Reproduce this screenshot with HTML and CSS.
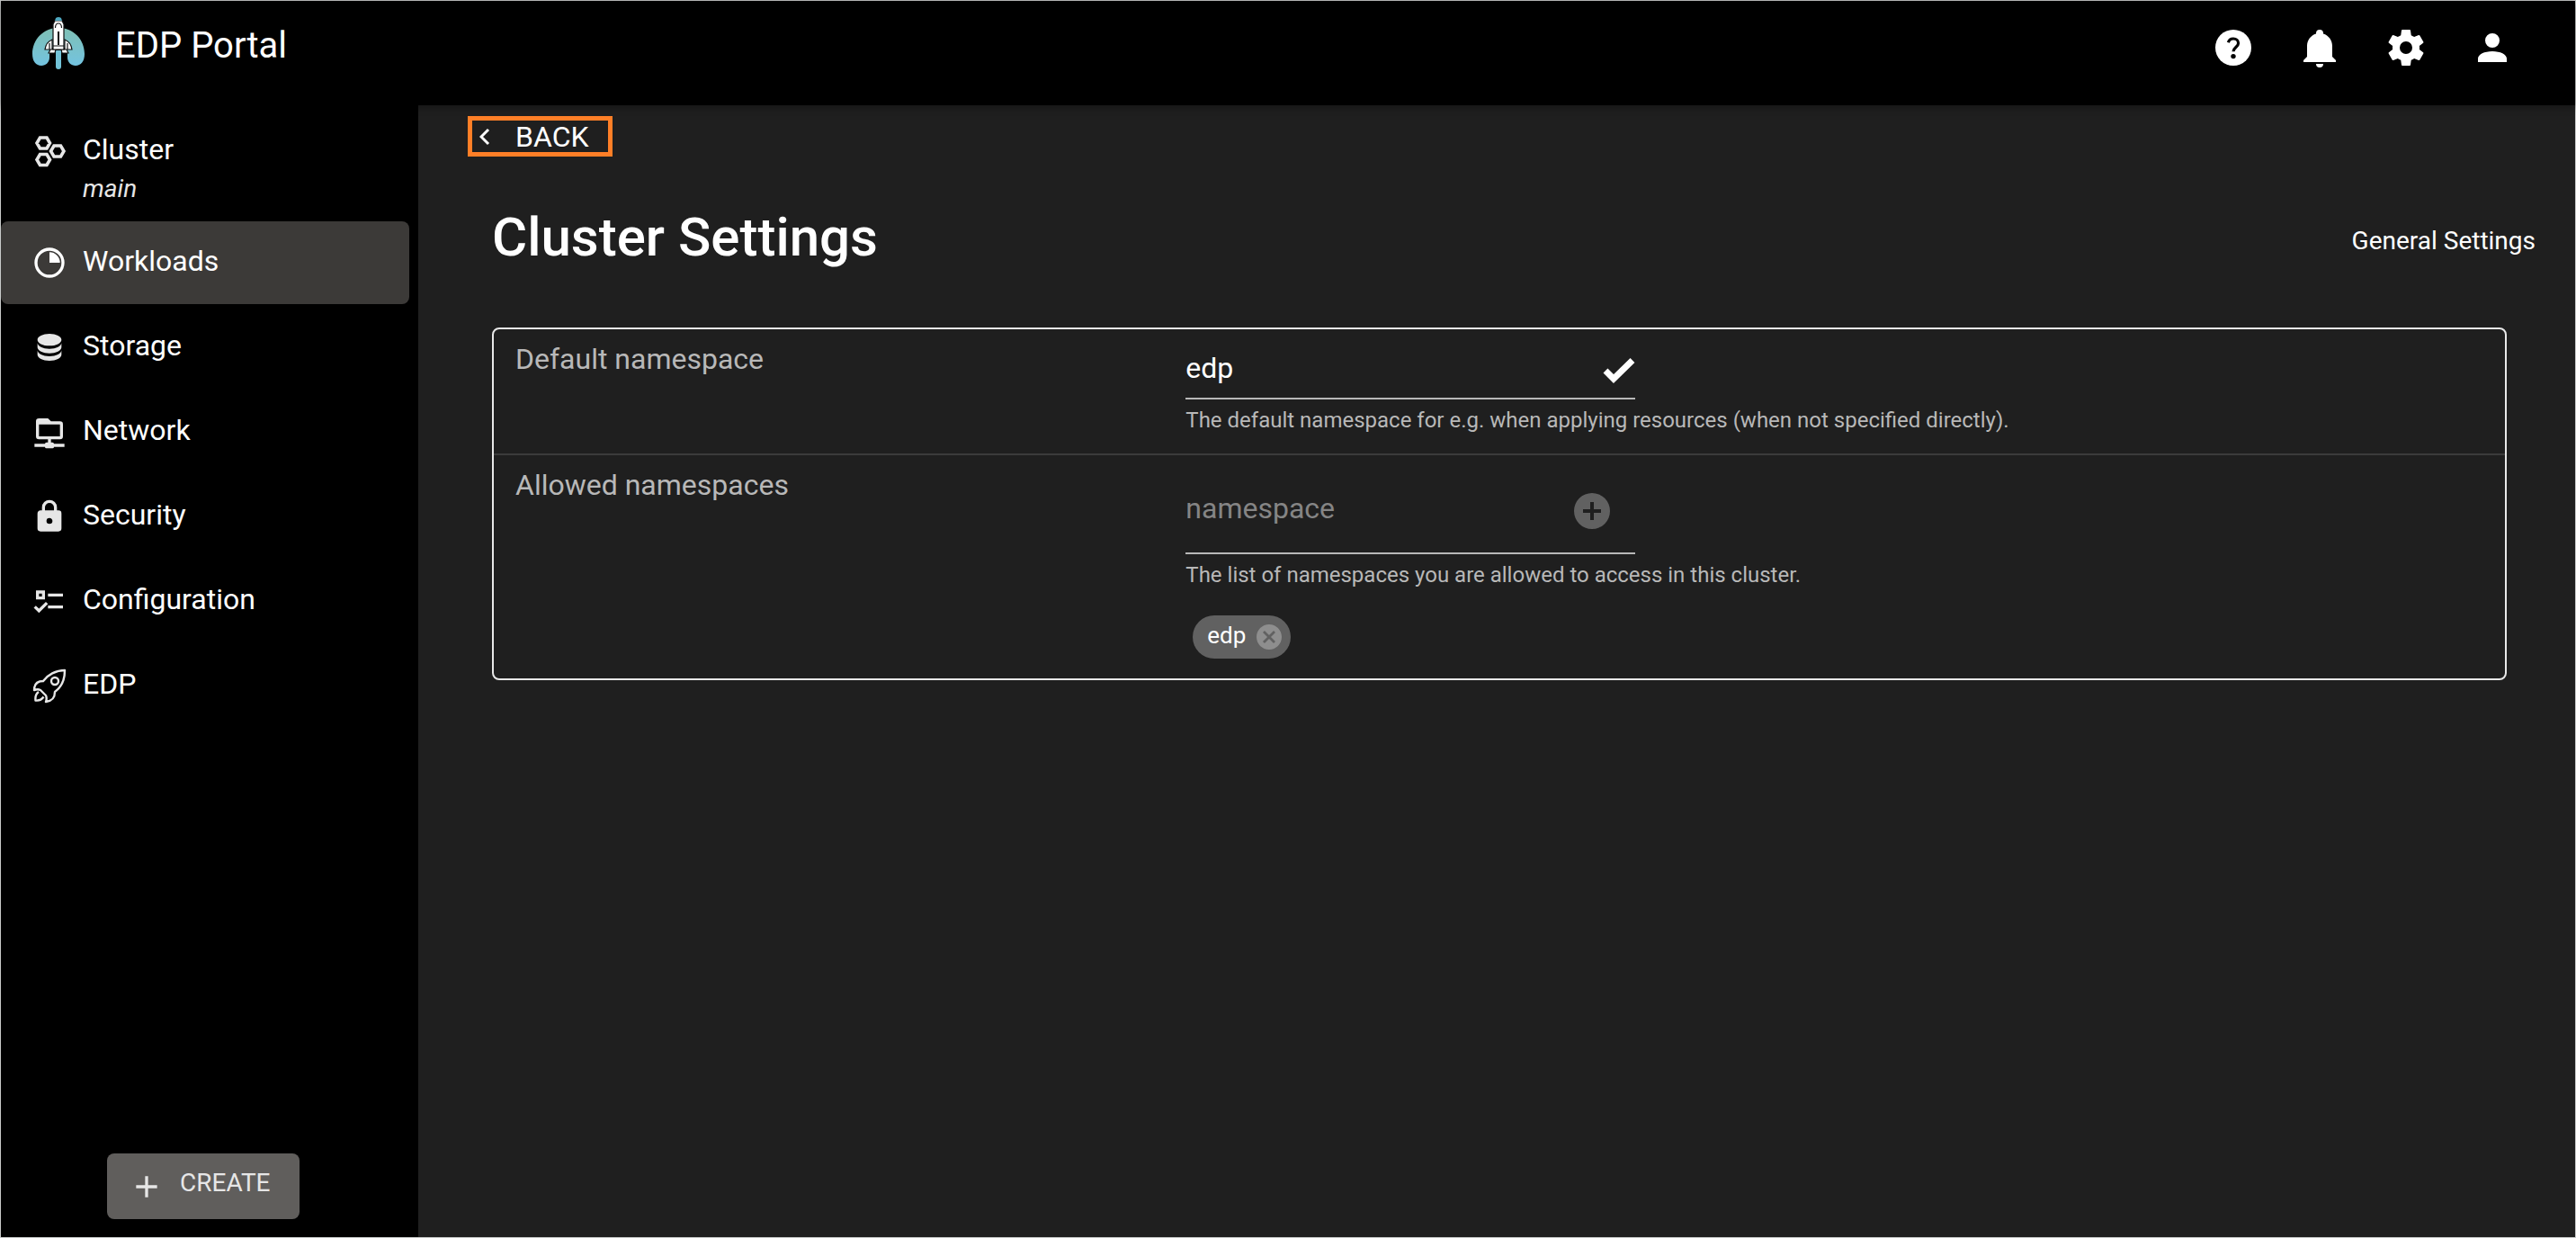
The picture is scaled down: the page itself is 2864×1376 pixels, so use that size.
FILE: index.html
```html
<!DOCTYPE html>
<html lang="en">
<head>
<meta charset="utf-8">
<title>EDP Portal</title>
<link rel="stylesheet" href="styles.css">
</head>
<body>
<div class="app">
  <header class="topbar">
    <svg class="logo" viewBox="0 0 58 58" aria-hidden="true">
      <defs><linearGradient id="sky" x1="0" y1="0" x2="0" y2="1"><stop offset="0" stop-color="#7fc0b4"/><stop offset="1" stop-color="#73c3e0"/></linearGradient></defs>
      <path fill="url(#sky)" d="M29 12C12 12 0 25 0 41c0 8 4 13 10 13 5 0 9-4 9-9V34h20v11c0 5 4 9 9 9 6 0 10-5 10-13C58 25 46 12 29 12z"/>
      <path fill="#73c3d8" d="M26 37h6v18a3 3 0 0 1-6 0z"/>
      <g fill="#fff" stroke="#111" stroke-width="1.200">
        <path d="M22 25v11h-8q1-8 8-11zM36 25v11h8q-1-8-8-11zM20 36h6l-1 4h-7zM32 36h6l2 4h-7z"/>
        <path d="M23 36V8l2-4h8l2 4v28z"/>
        <path fill="none" d="M25.500 12q0-5 3.500-5t3.500 5M19 29v7M39 29v7M23 32h12"/>
        <path fill="none" stroke-width="2" d="M29 16v15"/>
      </g>
      <path fill="#4fa8c0" d="M26 1q3-2 6 0l1 3h-8z"/>
    </svg>
    <div class="brand">EDP Portal</div>
    <nav class="actions" aria-label="Account">
      <button type="button" aria-label="Help"><svg viewBox="0 0 24 24"><circle cx="12" cy="12" r="10" fill="currentColor"/><path d="M9.200 9.100C9.600 7.700 10.600 7 12 7c1.600 0 2.800 1 2.800 2.500 0 2-2.800 2.500-2.800 4.600" fill="none" stroke="#000" stroke-width="1.600"/><circle cx="12" cy="16.800" r="1.350" fill="#000"/></svg></button>
      <button type="button" aria-label="Notifications"><svg viewBox="0 0 24 24"><path fill="currentColor" d="M21,19V20H3V19L5,17V11C5,7.900 7.030,5.170 10,4.290C10,4.190 10,4.100 10,4A2,2 0 0,1 12,2A2,2 0 0,1 14,4C14,4.100 14,4.190 14,4.290C16.970,5.170 19,7.900 19,11V17L21,19M14,21A2,2 0 0,1 12,23A2,2 0 0,1 10,21"/></svg></button>
      <button type="button" aria-label="Settings"><svg viewBox="0 0 24 24"><path fill="currentColor" d="M12,15.5A3.5,3.5 0 0,1 8.5,12A3.5,3.5 0 0,1 12,8.5A3.5,3.5 0 0,1 15.5,12A3.5,3.5 0 0,1 12,15.5M19.43,12.97C19.47,12.65 19.5,12.33 19.5,12C19.5,11.67 19.47,11.34 19.43,11L21.54,9.37C21.73,9.22 21.78,8.95 21.66,8.73L19.66,5.27C19.54,5.05 19.27,4.96 19.05,5.05L16.56,6.05C16.04,5.66 15.5,5.32 14.87,5.07L14.5,2.42C14.46,2.18 14.25,2 14,2H10C9.75,2 9.54,2.18 9.5,2.42L9.13,5.07C8.5,5.32 7.96,5.66 7.44,6.05L4.95,5.05C4.73,4.96 4.46,5.05 4.34,5.27L2.34,8.73C2.21,8.95 2.27,9.22 2.46,9.37L4.57,11C4.53,11.34 4.5,11.67 4.5,12C4.5,12.33 4.53,12.65 4.57,12.97L2.46,14.63C2.27,14.78 2.21,15.05 2.34,15.27L4.34,18.73C4.46,18.95 4.73,19.03 4.95,18.95L7.44,17.94C7.96,18.34 8.5,18.68 9.13,18.93L9.5,21.58C9.54,21.82 9.75,22 10,22H14C14.25,22 14.46,21.82 14.5,21.58L14.87,18.93C15.5,18.67 16.04,18.34 16.56,17.94L19.05,18.95C19.27,19.03 19.54,18.95 19.66,18.73L21.66,15.27C21.78,15.05 21.73,14.78 21.54,14.63L19.43,12.97Z"/></svg></button>
      <button type="button" aria-label="Account"><svg viewBox="0 0 24 24"><path fill="currentColor" d="M12,4A4,4 0 0,1 16,8A4,4 0 0,1 12,12A4,4 0 0,1 8,8A4,4 0 0,1 12,4M12,14C16.42,14 20,15.79 20,18V20H4V18C4,15.79 7.58,14 12,14Z"/></svg></button>
    </nav>
  </header>

  <aside class="sidebar">
    <nav class="menu" aria-label="Main">
      <a class="item item-cluster" href="#cluster">
        <svg viewBox="0 0 40 40" fill="none" stroke="currentColor" stroke-width="3.600"><path d="M9.500 5h7.500l3.500 6-3.500 6H9.500L6 11zM25 14h7.500l3.500 6-3.500 6H25l-3.500-6zM9.500 23.500h7.500l3.500 6-3.500 6H9.500L6 29.500z"/></svg>
        <span class="label">Cluster<em>main</em></span>
      </a>
      <a class="item active" href="#workloads" aria-current="page">
        <svg viewBox="0 0 24 24" fill="currentColor"><path d="M12 2a10 10 0 1 0 0 20 10 10 0 0 0 0-20m0 18a8 8 0 1 1 0-16 8 8 0 0 1 0 16m0-15v7h7a7 7 0 0 0-7-7"/></svg>
        <span class="label">Workloads</span>
      </a>
      <a class="item" href="#storage">
        <svg viewBox="0 0 24 24" fill="currentColor"><path d="M12,3C7.58,3 4,4.790 4,7C4,9.210 7.580,11 12,11C16.420,11 20,9.210 20,7C20,4.790 16.420,3 12,3M4,9V12C4,14.210 7.580,16 12,16C16.420,16 20,14.210 20,12V9C20,11.210 16.420,13 12,13C7.580,13 4,11.210 4,9M4,14V17C4,19.210 7.580,21 12,21C16.420,21 20,19.210 20,17V14C20,16.210 16.420,18 12,18C7.580,18 4,16.210 4,14Z"/></svg>
        <span class="label">Storage</span>
      </a>
      <a class="item" href="#network">
        <svg viewBox="0 0 24 24" fill="currentColor"><path d="M15,20A1,1 0 0,0 14,19H13V17H19A2,2 0 0,0 21,15V7A2,2 0 0,0 19,5H13L11,3H5A2,2 0 0,0 3,5V15A2,2 0 0,0 5,17H11V19H10A1,1 0 0,0 9,20H2V22H9A1,1 0 0,0 10,23H14A1,1 0 0,0 15,22H22V20H15M5,15V7H19V15H5Z"/></svg>
        <span class="label">Network</span>
      </a>
      <a class="item" href="#security">
        <svg viewBox="0 0 24 24" fill="currentColor"><path d="M12,17A2,2 0 0,0 14,15C14,13.890 13.100,13 12,13A2,2 0 0,0 10,15A2,2 0 0,0 12,17M18,8A2,2 0 0,1 20,10V20A2,2 0 0,1 18,22H6A2,2 0 0,1 4,20V10C4,8.890 4.900,8 6,8H7V6A5,5 0 0,1 12,1A5,5 0 0,1 17,6V8H18M12,3A3,3 0 0,0 9,6V8H15V6A3,3 0 0,0 12,3Z"/></svg>
        <span class="label">Security</span>
      </a>
      <a class="item" href="#configuration">
        <svg viewBox="0 0 24 24" fill="currentColor"><path d="M3,5H9V11H3V5M5,7V9H7V7H5M11,7H21V9H11V7M11,15H21V17H11V15M5,20L1.500,16.500L2.910,15.090L5,17.170L9.590,12.590L11,14L5,20Z"/></svg>
        <span class="label">Configuration</span>
      </a>
      <a class="item" href="#edp">
        <svg viewBox="0 0 40 40" fill="none" stroke="currentColor" stroke-width="2.400" stroke-linejoin="round"><path d="M37 3c-10 0-19 5-24 12-7 0-10 4-10 10 3-1 5-1 7 0l6 6c1 2 1 4 0 7 7-1 10-4 10-11 7-5 11-13 11-24zM8 27c-3 2-4 5-3.500 9.500 4 .5 7-1 9-4"/><circle cx="26" cy="15" r="4"/></svg>
        <span class="label">EDP</span>
      </a>
    </nav>
    <button class="create" type="button">
      <svg viewBox="0 0 24 24" fill="currentColor"><path d="M19 13h-6v6h-2v-6H5v-2h6V5h2v6h6z"/></svg>
      <span>CREATE</span>
    </button>
  </aside>

  <main class="content">
    <button class="back" type="button">
      <svg viewBox="0 0 12 20" fill="none" stroke="currentColor" stroke-width="3"><path d="M10 2l-8 8 8 8"/></svg>
      <span>BACK</span>
    </button>
    <div class="heading">
      <h1>Cluster Settings</h1>
      <a href="#general">General Settings</a>
    </div>
    <form class="card">
      <div class="row">
        <label class="name" for="default-ns">Default namespace</label>
        <div class="value">
          <div class="field">
            <input id="default-ns" type="text" value="edp" aria-describedby="default-help">
            <svg class="tick" viewBox="0 0 36 28" fill="none" stroke="currentColor" stroke-width="7"><path d="M3 14l9 9L33 2.500"/></svg>
          </div>
          <p class="help" id="default-help">The default namespace for e.g. when applying resources (when not specified directly).</p>
        </div>
      </div>
      <div class="row">
        <label class="name" for="allowed-ns">Allowed namespaces</label>
        <div class="value">
          <div class="field field-tall">
            <input id="allowed-ns" type="text" placeholder="namespace" aria-describedby="allowed-help">
            <button class="add" type="button" aria-label="Add namespace"><svg viewBox="0 0 24 24" fill="currentColor"><path d="M12 2a10 10 0 1 0 0 20 10 10 0 0 0 0-20m5 11h-4v4h-2v-4H7v-2h4V7h2v4h4z"/></svg></button>
          </div>
          <p class="help" id="allowed-help">The list of namespaces you are allowed to access in this cluster.</p>
          <div class="chip">
            <span>edp</span>
            <button type="button" aria-label="Remove edp"><svg viewBox="2 2 20 20" fill="currentColor"><path d="M12 2C6.470 2 2 6.470 2 12s4.470 10 10 10 10-4.470 10-10S17.530 2 12 2m5 13.590L15.590 17 12 13.410 8.410 17 7 15.590 10.590 12 7 8.410 8.410 7 12 10.590 15.590 7 17 8.410 13.410 12z"/></svg></button>
          </div>
        </div>
      </div>
    </form>
  </main>
</div>
</body>
</html>
```
FILE: styles.css
```css
* {
  box-sizing: border-box;
}

body {
  margin: 0;
  background: #1f1f1f;
  color: #fff;
  font-family: Roboto, "Liberation Sans", sans-serif;
  font-size: 32px;
}

button {
  padding: 0;
  border: 0;
  background: none;
  color: inherit;
  font: inherit;
}

svg {
  display: block;
  flex: none;
}

a {
  color: inherit;
  text-decoration: none;
}

.app {
  display: grid;
  grid-template-columns: 464px minmax(0, 1fr);
  grid-template-rows: auto 1fr;
  min-height: 100vh;
  border: 1px solid #c8cac9;
}

.topbar {
  grid-column: 1 / -1;
  display: flex;
  align-items: flex-start;
  height: 116px;
  padding: 4px 44px 0 35px;
  background: #000;
  box-shadow: 0 2px 8px rgba(0, 0, 0, 0.4);
}

.logo {
  width: 58px;
  height: 58px;
  margin-top: 14px;
}

.brand {
  margin: 22px 0 0 34px;
  font-size: 40px;
  line-height: 48px;
}

.actions {
  display: flex;
  margin-left: auto;
}

.actions button {
  display: grid;
  place-items: center;
  width: 96px;
  height: 96px;
}

.actions svg {
  width: 48px;
  height: 48px;
}

.sidebar {
  display: flex;
  flex-direction: column;
  align-items: flex-start;
  justify-content: space-between;
  padding-bottom: 20px;
  background: #000;
}

.menu {
  display: grid;
  gap: 2px;
  width: 100%;
  padding-right: 10px;
}

.item {
  display: flex;
  gap: 17px;
  min-height: 92px;
  padding: 22px 24px 0 34px;
  border-radius: 8px;
}

.item svg {
  width: 40px;
  height: 40px;
  margin-top: 4px;
  color: #e6e6e6;
}

.item-cluster {
  min-height: 127px;
  padding-top: 27px;
}

.label {
  line-height: 44px;
}

.label em {
  display: block;
  color: #e6e6e6;
  font-size: 28px;
  line-height: 44px;
}

.active {
  background: #3c3a38;
}

.active svg {
  color: #fff;
}

.create {
  display: flex;
  align-items: center;
  gap: 17px;
  height: 73px;
  margin-left: 118px;
  padding: 0 32px 0 24px;
  border-radius: 8px;
  background: #605e5c;
  color: #e6e6e6;
  font-size: 28px;
}

.create svg {
  width: 40px;
  height: 40px;
}

.create span {
  padding-bottom: 8px;
}

.content {
  display: flex;
  flex-direction: column;
  align-items: stretch;
  padding: 12px 44px 48px 82px;
}

.back {
  display: flex;
  align-items: center;
  align-self: flex-start;
  gap: 28px;
  height: 45px;
  margin-left: -27px;
  padding: 0 21px 0 8px;
  border: 5px solid #ff7f27;
}

.back svg {
  width: 12px;
  height: 20px;
}

.heading {
  display: flex;
  align-items: center;
  justify-content: space-between;
  margin-top: 50px;
}

h1 {
  margin: 0;
  font-size: 60px;
  font-weight: 500;
  line-height: 80px;
}

.heading a {
  padding-top: 6px;
  font-size: 28px;
}

.card {
  margin: 60px 32px 0 0;
  border: 2px solid #e8e8e8;
  border-radius: 8px;
}

.row {
  display: grid;
  grid-template-columns: 1fr 2fr;
  padding: 16px 0 22px;
}

.row + .row {
  border-top: 2px solid #3b3b3b;
}

.name,
.value {
  padding: 0 24px;
}

.name {
  color: #b8b8b8;
  line-height: 34px;
}

.field {
  display: flex;
  align-items: center;
  width: 500px;
  max-width: 100%;
  height: 62px;
  border-bottom: 2px solid #b8b8b8;
}

.field-tall {
  height: 94px;
  padding-right: 24px;
}

input {
  flex: 1;
  min-width: 0;
  height: 48px;
  padding: 0 0 6px;
  border: 0;
  outline: 0;
  background: none;
  color: #fff;
  font: inherit;
}

input::placeholder {
  color: #858585;
}

.tick {
  width: 36px;
  height: 28px;
}

.add svg {
  width: 48px;
  height: 48px;
  color: #616161;
}

.help {
  margin: 8px 0 0;
  color: #b8b8b8;
  font-size: 24px;
  line-height: 30px;
}

.chip {
  display: inline-flex;
  align-items: center;
  gap: 12px;
  height: 48px;
  margin: 30px 0 0 8px;
  padding: 0 10px 0 16px;
  border-radius: 24px;
  background: #616161;
  font-size: 26px;
}

.chip span {
  padding-bottom: 4px;
}

.chip svg {
  width: 28px;
  height: 28px;
  color: #8e8e8e;
}
```
